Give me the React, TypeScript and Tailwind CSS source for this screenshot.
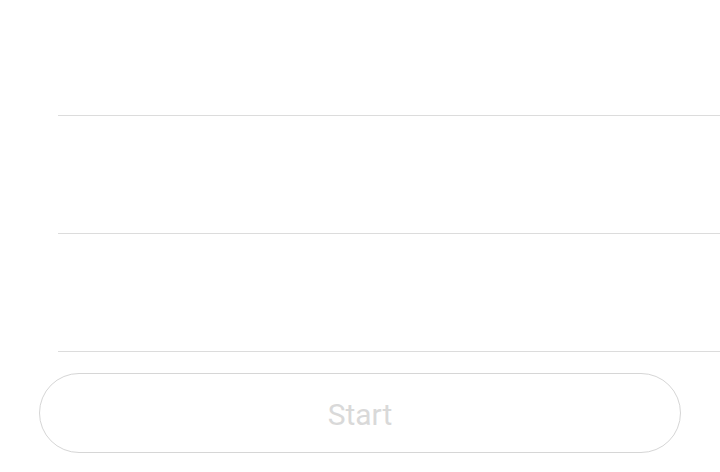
import React from 'react';

const App: React.FC = () => {
  const rows = ['h-[116px]', 'h-[118px]', 'h-[118px]'];

  return (
    <div className="w-[720px] h-[472px] bg-white overflow-hidden font-['Roboto',sans-serif]">
      <div className="pl-[58px]">
        {rows.map((h, i) => (
          <div key={i} className={`${h} border-b border-[#dcdcdc]`} />
        ))}
      </div>
      <div className="pl-[39px] pt-[21px]">
        <button
          disabled
          className="w-[642px] h-[80px] rounded-full border border-[#d6d6d6] bg-white text-[30px] text-[#d9d9d9] flex items-center justify-center pt-[2px]"
        >
          Start
        </button>
      </div>
    </div>
  );
};

export default App;
